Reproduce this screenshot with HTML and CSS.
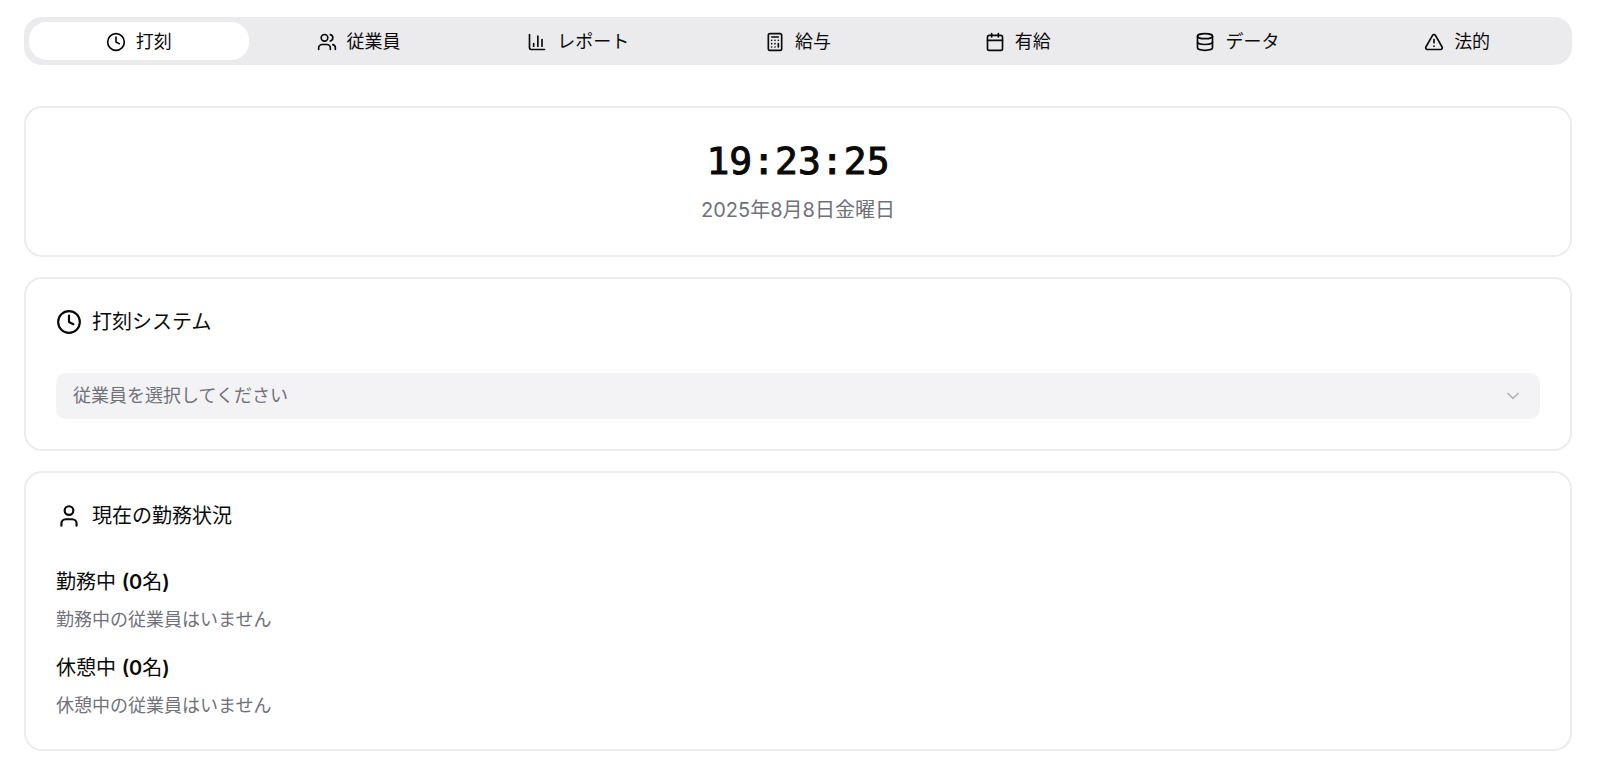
FILE: index.html
```html
<!DOCTYPE html>
<html lang="ja">
<head>
<meta charset="utf-8">
<meta name="viewport" content="width=device-width, initial-scale=1">
<title>打刻システム</title>
<link rel="stylesheet" href="styles.css">
</head>
<body>
<main class="page">
  <div class="tabs" role="tablist">
    <button class="tab tab-active" type="button" role="tab" aria-selected="true">
      <svg class="icon" viewBox="0 0 24 24" aria-hidden="true"><circle cx="12" cy="12" r="10"/><path d="M12 6v6l4 2"/></svg>打刻</button>
    <button class="tab" type="button" role="tab" aria-selected="false">
      <svg class="icon" viewBox="0 0 24 24" aria-hidden="true"><path d="M16 21v-2a4 4 0 0 0-4-4H6a4 4 0 0 0-4 4v2"/><path d="M16 3.128a4 4 0 0 1 0 7.744"/><path d="M22 21v-2a4 4 0 0 0-3-3.87"/><circle cx="9" cy="7" r="4"/></svg>従業員</button>
    <button class="tab" type="button" role="tab" aria-selected="false">
      <svg class="icon" viewBox="0 0 24 24" aria-hidden="true"><path d="M3 3v16a2 2 0 0 0 2 2h16"/><path d="M18 17V9"/><path d="M13 17V5"/><path d="M8 17v-3"/></svg>レポート</button>
    <button class="tab" type="button" role="tab" aria-selected="false">
      <svg class="icon" viewBox="0 0 24 24" aria-hidden="true"><rect width="16" height="20" x="4" y="2" rx="2"/><path d="M8 6h8"/><path d="M16 14v4"/><path d="M16 10h.01"/><path d="M12 10h.01"/><path d="M8 10h.01"/><path d="M12 14h.01"/><path d="M8 14h.01"/><path d="M12 18h.01"/><path d="M8 18h.01"/></svg>給与</button>
    <button class="tab" type="button" role="tab" aria-selected="false">
      <svg class="icon" viewBox="0 0 24 24" aria-hidden="true"><path d="M8 2v4"/><path d="M16 2v4"/><rect width="18" height="18" x="3" y="4" rx="2"/><path d="M3 10h18"/></svg>有給</button>
    <button class="tab" type="button" role="tab" aria-selected="false">
      <svg class="icon" viewBox="0 0 24 24" aria-hidden="true"><ellipse cx="12" cy="5" rx="9" ry="3"/><path d="M3 5v14a9 3 0 0 0 18 0V5"/><path d="M3 12a9 3 0 0 0 18 0"/></svg>データ</button>
    <button class="tab" type="button" role="tab" aria-selected="false">
      <svg class="icon" viewBox="0 0 24 24" aria-hidden="true"><path d="m21.73 18-8-14a2 2 0 0 0-3.48 0l-8 14A2 2 0 0 0 4 21h16a2 2 0 0 0 1.73-3"/><path d="M12 9v4"/><path d="M12 17h.01"/></svg>法的</button>
  </div>

  <div class="cards">
    <section class="card clock">
      <time class="clock-time">19:23:25</time>
      <p class="clock-date">2025年8月8日金曜日</p>
    </section>

    <section class="card">
      <h2 class="card-title">
        <svg class="icon icon-large" viewBox="0 0 24 24" aria-hidden="true"><circle cx="12" cy="12" r="10"/><path d="M12 6v6l4 2"/></svg>打刻システム</h2>
      <div class="picker">
        <select class="picker-select" aria-label="従業員">
          <option>従業員を選択してください</option>
        </select>
        <svg class="icon picker-arrow" viewBox="0 0 24 24" aria-hidden="true"><path d="m6 9 6 6 6-6"/></svg>
      </div>
    </section>

    <section class="card">
      <h2 class="card-title">
        <svg class="icon icon-large" viewBox="0 0 24 24" aria-hidden="true"><path d="M19 21v-2a4 4 0 0 0-4-4H9a4 4 0 0 0-4 4v2"/><circle cx="12" cy="7" r="4"/></svg>現在の勤務状況</h2>
      <div class="groups">
        <div class="group">
          <h3 class="group-title">勤務中 <span class="count">(0</span>名<span class="count">)</span></h3>
          <p class="group-empty">勤務中の従業員はいません</p>
        </div>
        <div class="group">
          <h3 class="group-title">休憩中 <span class="count">(0</span>名<span class="count">)</span></h3>
          <p class="group-empty">休憩中の従業員はいません</p>
        </div>
      </div>
    </section>
  </div>
</main>
</body>
</html>
```
FILE: styles.css
```css
* {
  box-sizing: border-box;
}

body {
  margin: 0;
  background: #fff;
  color: #0a0a0a;
  font-family: Inter, "Noto Sans CJK JP", sans-serif;
  font-size: 20px;
  line-height: 30px;
}

h2, h3, p {
  margin: 0;
}

.page {
  display: flex;
  flex-direction: column;
  gap: 41px;
  padding: 17px 28px 24px 24px;
}

.icon {
  width: 20px;
  height: 20px;
  flex: none;
  fill: none;
  stroke: currentColor;
  stroke-width: 2;
  stroke-linecap: round;
  stroke-linejoin: round;
}

.icon-large {
  width: 26px;
  height: 26px;
}

.tabs {
  display: grid;
  grid-template-columns: repeat(7, 1fr);
  padding: 5px;
  border-radius: 18px;
  background: #ebebee;
}

.tab {
  display: flex;
  align-items: center;
  justify-content: center;
  gap: 10px;
  height: 38px;
  padding: 1px 0 0;
  border: 0;
  border-radius: 18px;
  background: transparent;
  color: inherit;
  font: inherit;
  font-size: 18px;
}

.tab-active {
  background: #fff;
}

.cards {
  display: flex;
  flex-direction: column;
  gap: 20px;
}

.card {
  display: flex;
  flex-direction: column;
  gap: 36px;
  padding: 28px 30px 30px;
  border: 2px solid #ececec;
  border-radius: 18px;
}

.clock {
  align-items: center;
  gap: 11px;
  padding-top: 30px;
  text-align: center;
}

.clock-time {
  font-family: "DejaVu Sans Mono", monospace;
  font-size: 38px;
  line-height: 46px;
  -webkit-text-stroke: 1px currentColor;
}

.clock-date {
  color: #717179;
}

.card-title {
  display: flex;
  align-items: center;
  gap: 10px;
  font-size: 20px;
  font-weight: 400;
}

.picker {
  position: relative;
}

.picker-select {
  display: block;
  width: 100%;
  height: 46px;
  padding: 0 17px;
  border: 0;
  border-radius: 10px;
  appearance: none;
  background: #f3f3f5;
  color: #717179;
  font: inherit;
  font-size: 18px;
}

.picker-arrow {
  position: absolute;
  top: 13px;
  right: 17px;
  color: #717179;
  opacity: 0.5;
  pointer-events: none;
}

.groups {
  display: flex;
  flex-direction: column;
  gap: 20px;
}

.group {
  display: flex;
  flex-direction: column;
  gap: 10px;
}

.group-title {
  font-size: 20px;
  font-weight: 400;
}

.count {
  font-weight: 600;
}

.group-empty {
  color: #717179;
  font-size: 18px;
  line-height: 26px;
}
```
